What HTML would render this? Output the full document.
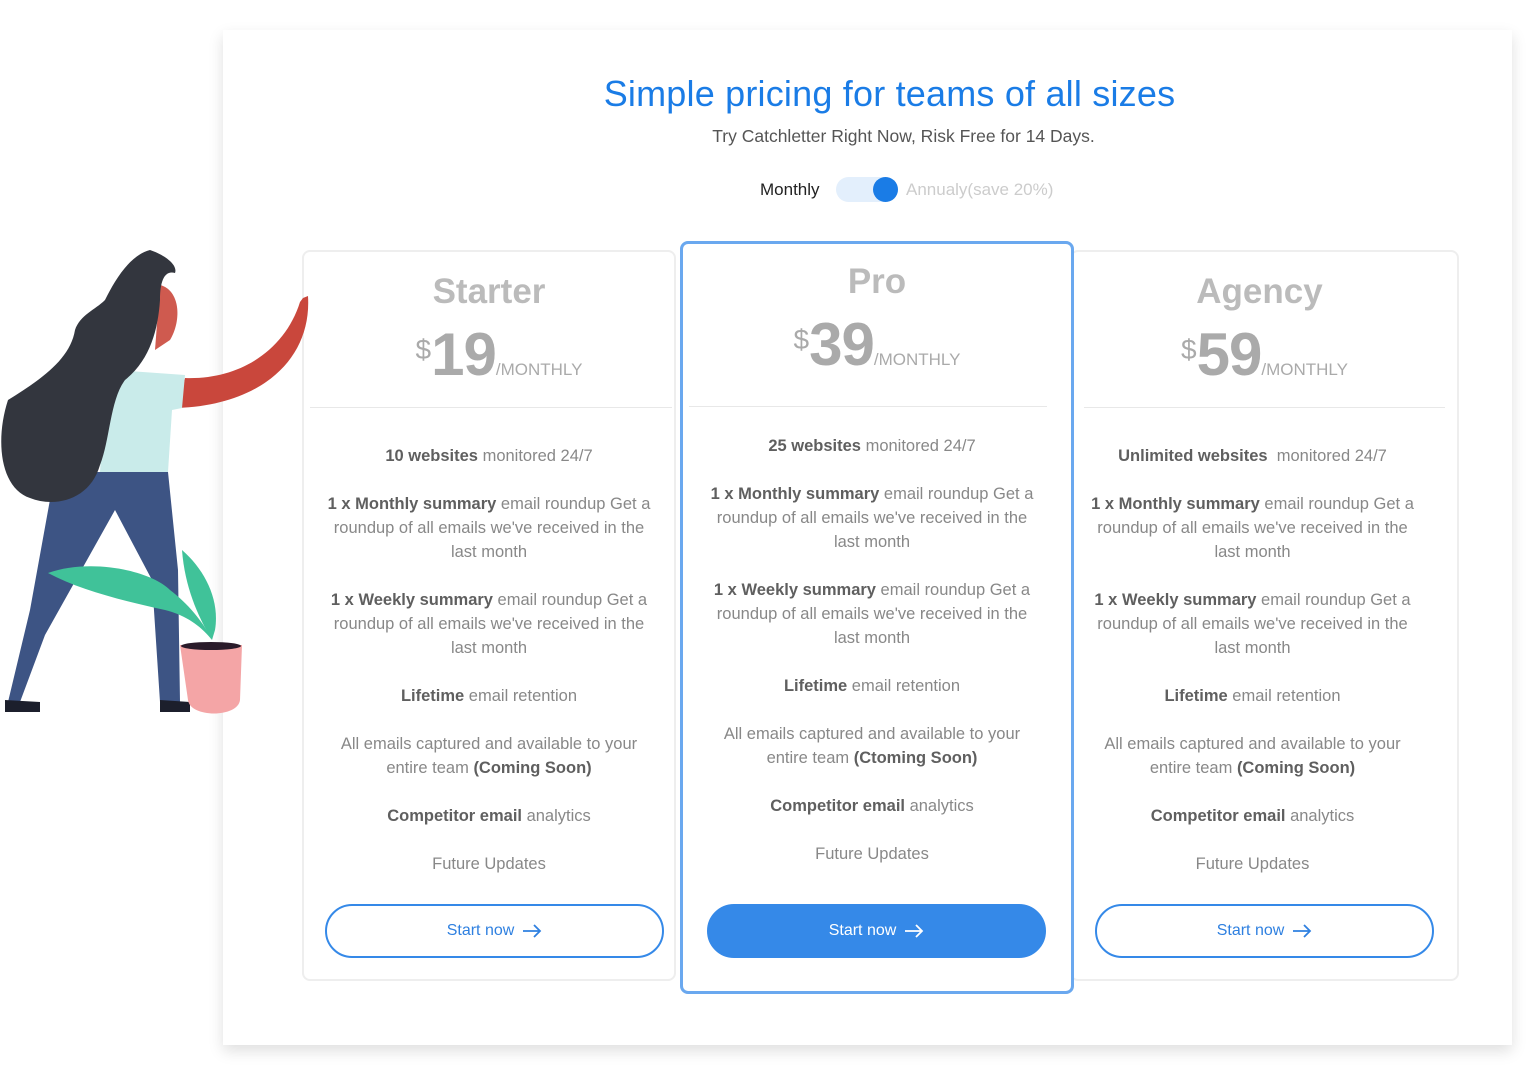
<!DOCTYPE html>
<html><head><meta charset="utf-8"><style>
*{margin:0;padding:0;box-sizing:border-box}
body{width:1529px;height:1079px;background:#fff;font-family:"Liberation Sans",sans-serif;position:relative;overflow:hidden}
.main{position:absolute;left:223px;top:30px;width:1289px;height:1015px;background:#fff;box-shadow:0 6px 14px rgba(0,0,0,.13)}
h1{position:absolute;left:22px;width:100%;top:43px;text-align:center;color:#1a7ce6;font-size:36px;font-weight:normal;letter-spacing:.2px}
.sub{position:absolute;left:36px;width:100%;top:96px;text-align:center;color:#555;font-size:17.5px}
.tog{position:absolute;top:147px;left:0;width:100%;font-size:17px}
.card{position:absolute;background:#fff;border:2px solid #eee;border-radius:8px;text-align:center}
.card.pro{border:3px solid #6aa8ef;z-index:2}
.title{position:absolute;width:100%;color:#bbb;font-size:35px;font-weight:bold}
.price{position:absolute;width:100%;padding-left:20px;color:#aaa;white-space:nowrap}
.price .d{font-size:28px;vertical-align:16px}
.price .n{font-size:60px;font-weight:bold;letter-spacing:-1px}
.price .m{font-size:17px;color:#aaa}
.div{position:absolute;height:1px;background:#e8e8e8}
.feat{position:absolute;width:100%;color:#888;font-size:16.5px;line-height:24px;white-space:nowrap}
.feat p{margin-bottom:24px}
.feat b{color:#5f5f5f}
.btn{position:absolute;height:54px;border:2px solid #3589e8;border-radius:27px;color:#2f80e0;font-size:16px;line-height:50px;text-align:center}
.btn svg{vertical-align:-3px;margin-left:8px}
.btn.f{background:#3589e8;color:#fff}
</style></head><body>
<div class="main">
<h1>Simple pricing for teams of all sizes</h1>
<div class="sub">Try Catchletter Right Now, Risk Free for 14 Days.</div>
<div class="tog">
<span style="position:absolute;left:537px;top:3px;color:#222">Monthly</span>
<div style="position:absolute;left:613px;top:0;width:62px;height:25px;border-radius:13px;background:#e3effc"></div>
<div style="position:absolute;left:650px;top:0;width:25px;height:25px;border-radius:50%;background:#1a7ce6"></div>
<span style="position:absolute;left:683px;top:3px;color:#ccc">Annualy(save 20%)</span>
</div>
</div>

<div class="card" style="left:302px;top:250px;width:374px;height:731px">
<div class="title" style="top:20px">Starter</div>
<div class="price" style="top:68px"><span class="d">$</span><span class="n">19</span><span class="m">/MONTHLY</span></div>
<div class="div" style="left:6px;right:2px;top:155px"></div>
<div class="feat" style="top:192px">
<p><b>10 websites</b> monitored 24/7</p>
<p><b>1 x Monthly summary</b> email roundup Get a<br>roundup of all emails we've received in the<br>last month</p>
<p><b>1 x Weekly summary</b> email roundup Get a<br>roundup of all emails we've received in the<br>last month</p>
<p><b>Lifetime</b> email retention</p>
<p>All emails captured and available to your<br>entire team <b>(Coming Soon)</b></p>
<p><b>Competitor email</b> analytics</p>
<p>Future Updates</p>
</div>
<div class="btn" style="left:21px;top:652px;width:339px">Start now<svg width="20" height="14" viewBox="0 0 20 14"><path d="M1 7H18M12 1L18 7L12 13" fill="none" stroke="currentColor" stroke-width="1.8"/></svg></div>
</div>

<div class="card pro" style="left:680px;top:241px;width:394px;height:753px">
<div class="title" style="top:18px">Pro</div>
<div class="price" style="top:66px;padding-left:0"><span class="d">$</span><span class="n">39</span><span class="m">/MONTHLY</span></div>
<div class="div" style="left:6px;right:24px;top:162px"></div>
<div class="feat" style="top:190px;left:-5px">
<p><b>25 websites</b> monitored 24/7</p>
<p><b>1 x Monthly summary</b> email roundup Get a<br>roundup of all emails we've received in the<br>last month</p>
<p><b>1 x Weekly summary</b> email roundup Get a<br>roundup of all emails we've received in the<br>last month</p>
<p><b>Lifetime</b> email retention</p>
<p>All emails captured and available to your<br>entire team <b>(Ctoming Soon)</b></p>
<p><b>Competitor email</b> analytics</p>
<p>Future Updates</p>
</div>
<div class="btn f" style="left:24px;top:660px;width:339px">Start now<svg width="20" height="14" viewBox="0 0 20 14"><path d="M1 7H18M12 1L18 7L12 13" fill="none" stroke="currentColor" stroke-width="1.8"/></svg></div>
</div>

<div class="card" style="left:1070px;top:250px;width:389px;height:731px">
<div class="title" style="top:20px;left:-5px">Agency</div>
<div class="price" style="top:68px;left:-10px"><span class="d">$</span><span class="n">59</span><span class="m">/MONTHLY</span></div>
<div class="div" style="left:12px;right:12px;top:155px"></div>
<div class="feat" style="top:192px;left:-12px">
<p><b>Unlimited websites</b>&nbsp; monitored 24/7</p>
<p><b>1 x Monthly summary</b> email roundup Get a<br>roundup of all emails we've received in the<br>last month</p>
<p><b>1 x Weekly summary</b> email roundup Get a<br>roundup of all emails we've received in the<br>last month</p>
<p><b>Lifetime</b> email retention</p>
<p>All emails captured and available to your<br>entire team <b>(Coming Soon)</b></p>
<p><b>Competitor email</b> analytics</p>
<p>Future Updates</p>
</div>
<div class="btn" style="left:23px;top:652px;width:339px">Start now<svg width="20" height="14" viewBox="0 0 20 14"><path d="M1 7H18M12 1L18 7L12 13" fill="none" stroke="currentColor" stroke-width="1.8"/></svg></div>
</div>

<svg style="position:absolute;left:0;top:240px;z-index:3" width="320" height="480" viewBox="0 0 320 480">
<path d="M185 138 C240 140 285 110 300 62 L303 58 L308 56 C312 120 260 165 178 168 Z" fill="#c9473c"/>
<path d="M160 45 C180 50 182 80 170 100 L155 110 Z" fill="#cf5a4f"/>
<path d="M115 130 L185 135 L182 168 L172 170 L168 232 L100 232 L105 150 Z" fill="#c9ebea"/>
<path d="M55 232 L168 232 L178 330 L180 462 L160 462 L152 340 L115 270 L45 395 L20 462 L8 462 L30 370 Z" fill="#3d5484"/>
<path d="M5 460 L40 462 L40 472 L5 472 Z M160 460 L190 462 L190 472 L160 472 Z" fill="#1c1f2c"/>
<path d="M150 10 C165 15 178 25 175 33 C165 30 160 40 160 60 C158 90 150 120 125 140 C110 160 110 200 100 225 C90 260 55 268 30 258 C0 248 -5 200 8 160 C40 140 70 120 75 90 C80 75 95 70 105 60 C115 40 130 15 150 10 Z" fill="#33363e"/>
<path d="M180 405 L242 405 L240 460 C238 478 190 478 188 460 Z" fill="#f4a5a6"/>
<ellipse cx="211" cy="406" rx="30" ry="4" fill="#2a1b2a"/>
<path d="M48 333 C90 318 150 330 170 350 C190 365 205 385 212 400 C200 385 185 375 165 370 C120 360 80 350 48 333 Z" fill="#40c299"/>
<path d="M182 310 C205 330 220 360 215 390 L212 400 C200 380 185 350 182 310 Z" fill="#40c299"/>
</svg>
</body></html>
